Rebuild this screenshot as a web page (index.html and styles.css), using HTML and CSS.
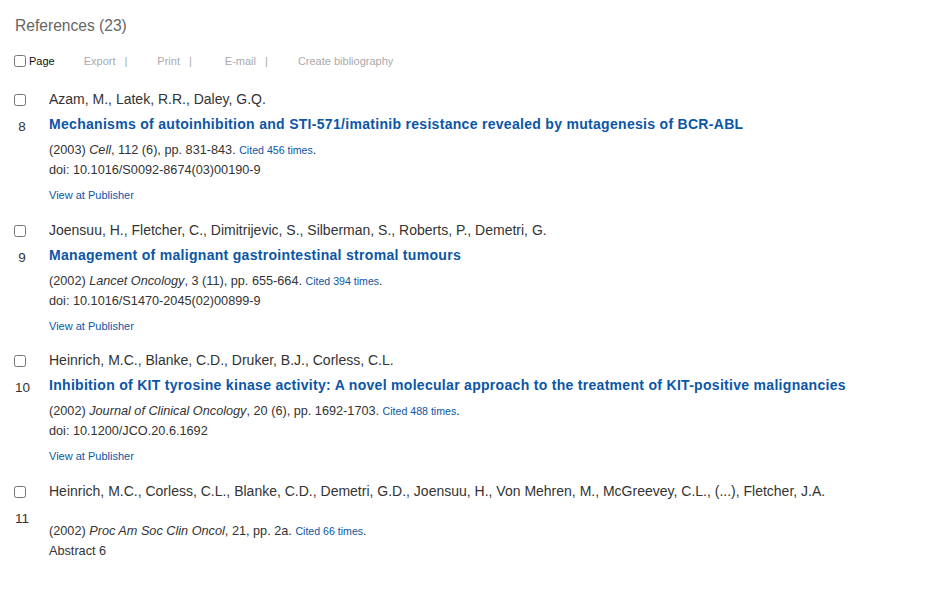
FILE: index.html
```html
<!DOCTYPE html>
<html>
<head>
<meta charset="utf-8">
<link rel="stylesheet" href="styles.css">
</head>
<body>
<div class="page">
  <h2 class="heading">References (23)</h2>
  <div class="toolbar">
    <label class="page-sel"><input type="checkbox" class="cb"><span>Page</span></label>
    <span class="tool">Export</span><span class="sep">|</span>
    <span class="tool t-print">Print</span><span class="sep">|</span>
    <span class="tool t-mail">E-mail</span><span class="sep">|</span>
    <span class="tool t-bib">Create bibliography</span>
  </div>
  <ul class="refs">
    <li class="ref">
      <div class="side"><input type="checkbox" class="cb"><span class="num">8</span></div>
      <div class="body">
        <div class="authors">Azam, M., Latek, R.R., Daley, G.Q.</div>
        <a class="title">Mechanisms of autoinhibition and STI-571/imatinib resistance revealed by mutagenesis of BCR-ABL</a>
        <div class="src">(2003) <i>Cell</i>, 112 (6), pp. 831-843. <a class="cited">Cited 456 times</a>.</div>
        <div class="doi">doi: 10.1016/S0092-8674(03)00190-9</div>
        <a class="pub">View at Publisher</a>
      </div>
    </li>
    <li class="ref">
      <div class="side"><input type="checkbox" class="cb"><span class="num">9</span></div>
      <div class="body">
        <div class="authors">Joensuu, H., Fletcher, C., Dimitrijevic, S., Silberman, S., Roberts, P., Demetri, G.</div>
        <a class="title">Management of malignant gastrointestinal stromal tumours</a>
        <div class="src">(2002) <i>Lancet Oncology</i>, 3 (11), pp. 655-664. <a class="cited">Cited 394 times</a>.</div>
        <div class="doi">doi: 10.1016/S1470-2045(02)00899-9</div>
        <a class="pub">View at Publisher</a>
      </div>
    </li>
    <li class="ref">
      <div class="side"><input type="checkbox" class="cb"><span class="num">10</span></div>
      <div class="body">
        <div class="authors">Heinrich, M.C., Blanke, C.D., Druker, B.J., Corless, C.L.</div>
        <a class="title">Inhibition of KIT tyrosine kinase activity: A novel molecular approach to the treatment of KIT-positive malignancies</a>
        <div class="src">(2002) <i>Journal of Clinical Oncology</i>, 20 (6), pp. 1692-1703. <a class="cited">Cited 488 times</a>.</div>
        <div class="doi">doi: 10.1200/JCO.20.6.1692</div>
        <a class="pub">View at Publisher</a>
      </div>
    </li>
    <li class="ref">
      <div class="side"><input type="checkbox" class="cb"><span class="num">11</span></div>
      <div class="body">
        <div class="authors">Heinrich, M.C., Corless, C.L., Blanke, C.D., Demetri, G.D., Joensuu, H., Von Mehren, M., McGreevey, C.L., (...), Fletcher, J.A.</div>
        <div class="title-empty"></div>
        <div class="src">(2002) <i>Proc Am Soc Clin Oncol</i>, 21, pp. 2a. <a class="cited">Cited 66 times</a>.</div>
        <div class="doi">Abstract 6</div>
      </div>
    </li>
  </ul>
</div>
</body>
</html>
```

FILE: styles.css
```css
html, body {
  margin: 0;
  padding: 0;
  background: #fff;
}
body {
  font-family: "Liberation Sans", Arial, sans-serif;
  color: #333;
}
.page {
  padding: 15px 0 0 15px;
}
.heading {
  margin: 0;
  font-size: 15.6px;
  font-weight: normal;
  color: #666;
  line-height: 22px;
}
.toolbar {
  display: flex;
  align-items: center;
  margin-top: 16px;
  height: 16px;
  font-size: 11px;
  color: #aaa;
}
.page-sel {
  display: flex;
  align-items: center;
  color: #111;
  margin-left: -1px;
}
.page-sel span {
  margin-left: 3px;
  font-size: 11px;
}
.cb {
  margin: 0;
  width: 12px;
  height: 12px;
}
.tool {
  margin-left: 29px;
}
.tool.t-print {
  margin-left: 30px;
}
.tool.t-mail {
  margin-left: 33px;
}
.tool.t-bib {
  margin-left: 30px;
}
.sep {
  margin-left: 9px;
}
.refs {
  list-style: none;
  margin: 20px 0 0 0;
  padding: 0;
}
.ref {
  display: grid;
  grid-template-columns: 34px 1fr;
  height: 130.5px;
}
.side {
  display: flex;
  flex-direction: column;
  align-items: flex-start;
}
.side .cb {
  margin-top: 5px;
  margin-left: -1px;
}
.num {
  margin-top: 13px;
  font-size: 13.5px;
  color: #333;
  width: 14px;
  text-align: center;
}
.body {
  display: flex;
  flex-direction: column;
  align-items: flex-start;
}
.authors {
  font-size: 14px;
  line-height: 20px;
  color: #333;
}
.title {
  margin-top: 5px;
  font-size: 14px;
  font-weight: bold;
  line-height: 20px;
  color: #0b56a6;
  letter-spacing: 0.3px;
}
.title-empty {
  height: 14px;
}
.src {
  margin-top: 7px;
  font-size: 12.7px;
  line-height: 18px;
  color: #333;
}
.cited {
  font-size: 10.6px;
  color: #0b56a6;
}
.doi {
  margin-top: 2px;
  font-size: 12.7px;
  line-height: 18px;
  color: #333;
}
.pub {
  margin-top: 8px;
  font-size: 11px;
  line-height: 16px;
  color: #0b56a6;
}
```
